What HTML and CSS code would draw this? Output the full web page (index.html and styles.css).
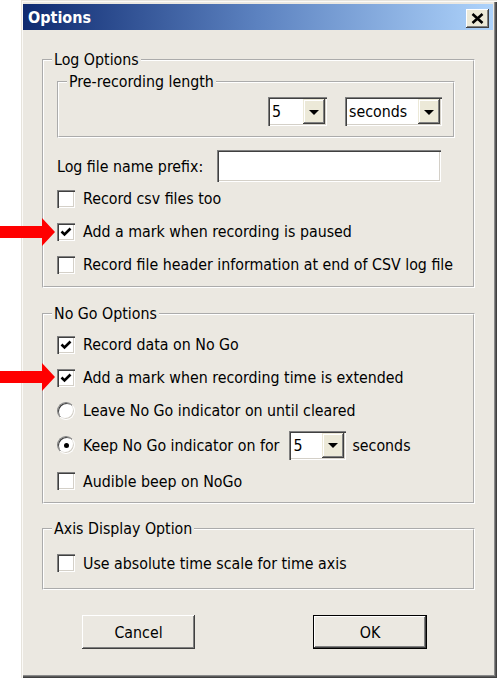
FILE: index.html
```html
<!DOCTYPE html>
<html>
<head>
<meta charset="utf-8">
<title>Options</title>
<link rel="stylesheet" href="styles.css">
</head>
<body>
<div class="window">
  <div class="titlebar">
    <span class="title">Options</span>
    <span class="close"><svg width="13" height="11" viewBox="0 0 13 11"><path d="M1.5 1 L11.5 10 M11.5 1 L1.5 10" stroke="#000" stroke-width="2.6" fill="none"/></svg></span>
  </div>
  <div class="client">
    <fieldset class="group g-log">
      <legend>Log Options</legend>
      <div class="gbody log-body">
        <fieldset class="group g-pre">
          <legend>Pre-recording length</legend>
          <div class="pre-row">
            <div class="combo c-num"><span class="val">5</span><span class="dd"><i class="tri"></i></span></div>
            <div class="combo c-unit"><span class="val">seconds</span><span class="dd"><i class="tri"></i></span></div>
          </div>
        </fieldset>
        <div class="prefix-row"><span>Log file name prefix:</span><div class="textbox"></div></div>
        <div class="row"><span class="cb"></span><span>Record csv files too</span></div>
        <div class="row"><span class="cb checked"><svg width="14" height="14" viewBox="0 0 14 14"><path d="M2.5 6.5 L5.5 9.5 L11.5 3.5" stroke="#000" stroke-width="2.6" fill="none"/></svg></span><span>Add a mark when recording is paused</span></div>
        <div class="row"><span class="cb"></span><span>Record file header information at end of CSV log file</span></div>
      </div>
    </fieldset>

    <fieldset class="group g-nogo">
      <legend>No Go Options</legend>
      <div class="gbody nogo-body">
        <div class="row"><span class="cb checked"><svg width="14" height="14" viewBox="0 0 14 14"><path d="M2.5 6.5 L5.5 9.5 L11.5 3.5" stroke="#000" stroke-width="2.6" fill="none"/></svg></span><span>Record data on No Go</span></div>
        <div class="row"><span class="cb checked"><svg width="14" height="14" viewBox="0 0 14 14"><path d="M2.5 6.5 L5.5 9.5 L11.5 3.5" stroke="#000" stroke-width="2.6" fill="none"/></svg></span><span>Add a mark when recording time is extended</span></div>
        <div class="row"><span class="rb"></span><span>Leave No Go indicator on until cleared</span></div>
        <div class="row row-tall"><span class="rb on"></span><span>Keep No Go indicator on for</span><div class="combo c-keep"><span class="val">5</span><span class="dd"><i class="tri"></i></span></div><span>seconds</span></div>
        <div class="row row-tall"><span class="cb"></span><span>Audible beep on NoGo</span></div>
      </div>
    </fieldset>

    <fieldset class="group g-axis">
      <legend>Axis Display Option</legend>
      <div class="gbody axis-body">
        <div class="row row-axis"><span class="cb"></span><span>Use absolute time scale for time axis</span></div>
      </div>
    </fieldset>

    <div class="buttons">
      <div class="btn">Cancel</div>
      <div class="btn btn-default">OK</div>
    </div>
  </div>
</div>

<svg class="arrow arrow-1" width="56" height="28" viewBox="0 0 56 28"><path d="M0 8 H42 V0 L55 14 L42 28 V20 H0 Z" fill="#ff0000"/></svg>
<svg class="arrow arrow-2" width="56" height="28" viewBox="0 0 56 28"><path d="M0 8 H42 V0 L55 14 L42 28 V20 H0 Z" fill="#ff0000"/></svg>
</body>
</html>
```

FILE: styles.css
```css
html, body {
  margin: 0;
  padding: 0;
  background: #ffffff;
}
body {
  position: relative;
  width: 497px;
  height: 678px;
  overflow: hidden;
  font-family: "DejaVu Sans Condensed", "DejaVu Sans", sans-serif;
  font-size: 15.8px;
  color: #000;
}
.window {
  margin-left: 21px;
  width: 476px;
  height: 678px;
  box-sizing: border-box;
  background: #ebe8e1;
  padding: 4px 4px 4px 2px;
  display: flex;
  flex-direction: column;
  box-shadow: inset 1px 1px 0 #e6e3dc, inset 2px 2px 0 #fbfaf7, inset -1px -1px 0 #404040, inset -2px -2px 0 #5a5a5a, inset -3px -3px 0 #8a8a8a;
}
.titlebar {
  height: 26px;
  flex: none;
  display: flex;
  align-items: center;
  background: linear-gradient(to right, #0e2a70, #5c82c0 50%, #aed3fb);
}
.title {
  padding-left: 5px;
  color: #fff;
  font-weight: bold;
  font-size: 16px;
  flex: 1;
}
.close {
  width: 23px;
  height: 19px;
  margin: 3px 4px 0 0;
  background: #ece9d8;
  box-shadow: inset -1px -1px 0 #404040, inset 1px 1px 0 #fff, inset -2px -2px 0 #808080;
  display: flex;
  align-items: center;
  justify-content: center;
}
.close svg { display: block; margin-top: -1px; }
.client {
  flex: 1;
  padding: 20px 18px 0 19px;
  display: flex;
  flex-direction: column;
}
.group {
  margin: 0;
  border: 2px groove #fff;
  min-width: 0;
}
.group legend {
  padding: 0 2px;
  line-height: 20px;
  height: 20px;
}
.g-log { padding: 0 18px 0 8px; }
.log-body { padding: 2px 0 5px 5px; }
.g-pre { padding: 0 11px 0 8px; }
.pre-row {
  display: flex;
  justify-content: flex-end;
  gap: 18px;
  padding: 5px 0 10px;
}
.combo {
  height: 29px;
  box-sizing: border-box;
  background: #fff;
  box-shadow: inset 1px 1px 0 #808080, inset 2px 2px 0 #404040, inset -1px -1px 0 #fff, inset -2px -2px 0 #d4d0c8;
  display: flex;
  align-items: stretch;
  padding: 2px;
}
.combo .val {
  flex: 1;
  display: flex;
  align-items: center;
  padding-left: 2px;
}
.combo .dd {
  width: 22px;
  flex: none;
  background: #ece9d8;
  box-shadow: inset -1px -1px 0 #404040, inset 1px 1px 0 #ece9d8, inset -2px -2px 0 #808080, inset 2px 2px 0 #fff;
  display: flex;
  align-items: center;
  justify-content: center;
}
.tri {
  width: 0;
  height: 0;
  border-left: 5px solid transparent;
  border-right: 5px solid transparent;
  border-top: 5px solid #000;
  margin-top: 1px;
}
.c-num { width: 59px; }
.c-unit { width: 97px; }
.c-keep { width: 57px; margin: 0 6px 0 10px; }
.prefix-row {
  margin-top: 12px;
  height: 32px;
  display: flex;
  align-items: center;
}
.textbox {
  margin-left: auto;
  margin-right: 14px;
  width: 224px;
  height: 32px;
  background: #fff;
  box-shadow: inset 1px 1px 0 #808080, inset 2px 2px 0 #404040, inset -1px -1px 0 #fff, inset -2px -2px 0 #d4d0c8;
}
.row {
  height: 33px;
  display: flex;
  align-items: center;
  white-space: nowrap;
}
.row-tall { height: 36px; }
.row-axis { height: 34px; }
.cb, .rb {
  width: 18px;
  height: 18px;
  flex: none;
  margin-right: 8px;
  box-sizing: border-box;
  background: #fff;
  display: flex;
  align-items: center;
  justify-content: center;
}
.cb {
  box-shadow: inset 1px 1px 0 #808080, inset 2px 2px 0 #404040, inset -1px -1px 0 #fff, inset -2px -2px 0 #d4d0c8;
}
.cb svg { display: block; }
.rb {
  border-radius: 50%;
  border: 1px solid;
  border-color: #808080 #fff #fff #808080;
  box-shadow: inset 1px 1px 0 #404040, inset -1px -1px 0 #d4d0c8;
}
.rb.on::after {
  content: "";
  width: 5px;
  height: 5px;
  border-radius: 50%;
  background: #000;
}
.g-nogo { margin-top: 16px; padding: 0 18px 0 8px; }
.nogo-body { padding: 4px 0 3px 5px; }
.g-axis { margin-top: 15px; padding: 0 18px 0 8px; }
.axis-body { padding: 7px 0 8px 5px; }
.buttons {
  margin-top: 25px;
  padding-left: 40px;
  display: flex;
  gap: 118px;
}
.btn {
  width: 113px;
  height: 34px;
  box-sizing: border-box;
  background: #ebe8e1;
  box-shadow: inset -1px -1px 0 #404040, inset 1px 1px 0 #fff, inset -2px -2px 0 #808080;
  display: flex;
  align-items: center;
  justify-content: center;
}
.btn-default {
  width: 114px;
  border: 1px solid #000;
}
.arrow {
  position: absolute;
  left: 0;
  display: block;
}
.arrow-1 { top: 218px; }
.arrow-2 { top: 363px; }
```
